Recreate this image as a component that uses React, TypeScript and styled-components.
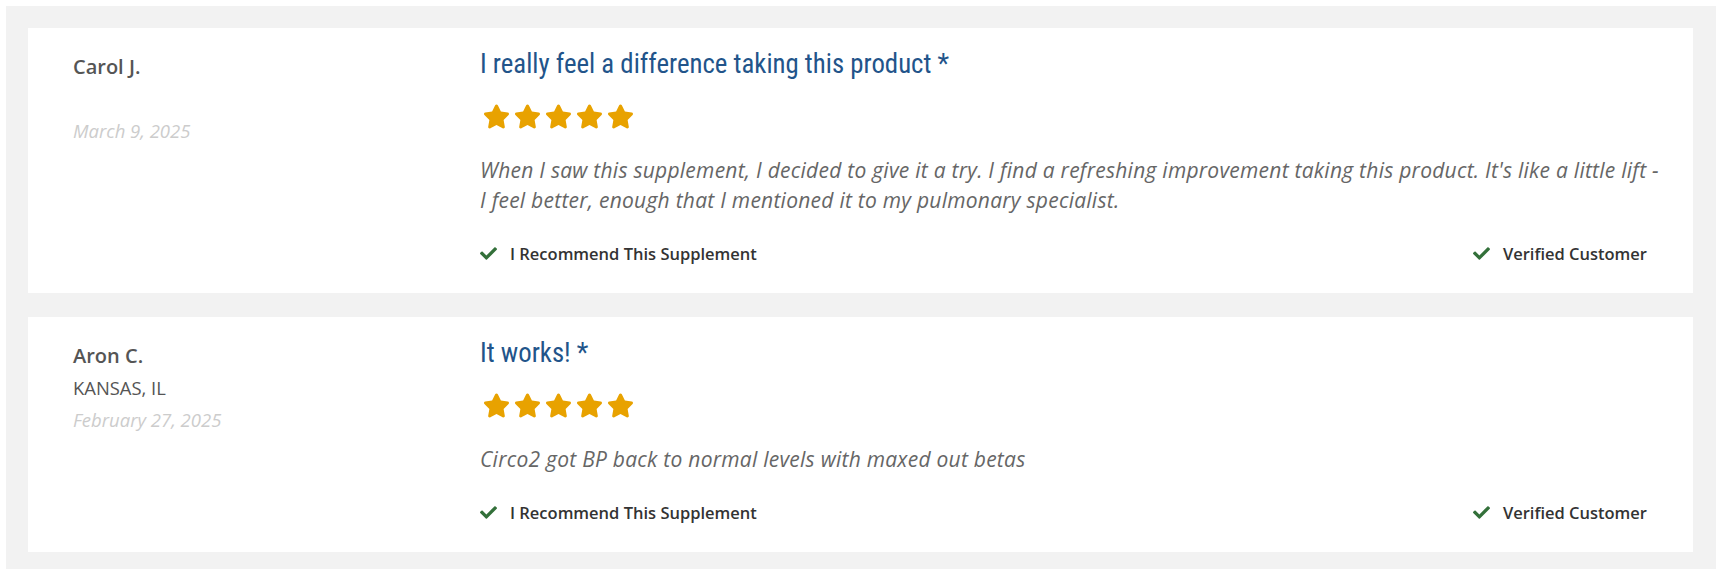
import React from "react";
import styled, { createGlobalStyle } from "styled-components";
import { FaStar, FaCheck } from "react-icons/fa";

const Global = createGlobalStyle`
  html, body { margin: 0; padding: 0; background: #ffffff; }
  body { font-family: "Open Sans", "Lato", sans-serif; }
  * { box-sizing: border-box; }
`;

const Wrapper = styled.div`
  width: 1710px;
  margin: 6px 0 0 6px;
  background: #f2f2f2;
  padding: 22px 23px 22px 22px;
  display: flex;
  flex-direction: column;
  gap: 24px;
`;

const Card = styled.article`
  background: #ffffff;
  display: grid;
  grid-template-columns: 407px 1fr;
  padding: 0 28px 28px 45px;
`;

const Author = styled.div`
  padding-top: 23px;
  display: flex;
  flex-direction: column;
`;

const Name = styled.div`
  font-family: "Open Sans", sans-serif;
  font-weight: 600;
  font-size: 20px;
  line-height: 32px;
  color: #555555;
`;

const Location = styled.div`
  font-family: "Open Sans", sans-serif;
  font-size: 18.4px;
  line-height: 32px;
  height: 32px;
  color: #555555;
  text-transform: uppercase;
`;

const DateText = styled.div`
  font-family: "Open Sans", sans-serif;
  font-style: italic;
  font-size: 18.5px;
  line-height: 32px;
  color: #cccccc;
`;

const Content = styled.div`
  padding-top: 21px;
  display: flex;
  flex-direction: column;
`;

const Title = styled.h3`
  margin: 0;
  font-family: "Roboto Condensed", "Liberation Sans Narrow", "Roboto", sans-serif;
  font-stretch: condensed;
  font-weight: 400;
  font-size: 26.8px;
  line-height: 30px;
  color: #22548a;
`;

const Stars = styled.div`
  display: flex;
  gap: 4px;
  margin-top: 23px;
  height: 28px;
  align-items: center;
  padding-left: 3px;
  color: #e8a200;
`;

const Body = styled.p`
  margin: 25px 0 0;
  font-family: "Open Sans", sans-serif;
  font-style: italic;
  font-size: 21px;
  letter-spacing: 0.25px;
  line-height: 30px;
  color: #666666;
`;

const Footer = styled.div`
  margin-top: 26px;
  padding-right: 18px;
  display: flex;
  justify-content: space-between;
  align-items: center;
  height: 24px;
`;

const Badge = styled.div`
  display: flex;
  align-items: center;
  gap: 13px;
  font-family: "Open Sans", sans-serif;
  font-weight: 600;
  font-size: 16.5px;
  color: #333333;
  svg { color: #33703a; }
`;

type Review = {
  name: string;
  location?: string;
  date: string;
  title: string;
  body: string;
};

const reviews: Review[] = [
  {
    name: "Carol J.",
    date: "March 9, 2025",
    title: "I really feel a difference taking this product *",
    body:
      "When I saw this supplement, I decided to give it a try. I find a refreshing improvement taking this product. It's like a little lift - I feel better, enough that I mentioned it to my pulmonary specialist.",
  },
  {
    name: "Aron C.",
    location: "Kansas, IL",
    date: "February 27, 2025",
    title: "It works! *",
    body: "Circo2 got BP back to normal levels with maxed out betas",
  },
];

export default function App() {
  return (
    <>
      <Global />
      <Wrapper>
        {reviews.map((r) => (
          <Card key={r.name}>
            <Author>
              <Name>{r.name}</Name>
              <Location>{r.location ?? ""}</Location>
              <DateText>{r.date}</DateText>
            </Author>
            <Content>
              <Title>{r.title}</Title>
              <Stars>
                {[0, 1, 2, 3, 4].map((i) => (
                  <FaStar key={i} size={27} />
                ))}
              </Stars>
              <Body>{r.body}</Body>
              <Footer>
                <Badge>
                  <FaCheck size={17} />
                  I Recommend This Supplement
                </Badge>
                <Badge>
                  <FaCheck size={17} />
                  Verified Customer
                </Badge>
              </Footer>
            </Content>
          </Card>
        ))}
      </Wrapper>
    </>
  );
}
